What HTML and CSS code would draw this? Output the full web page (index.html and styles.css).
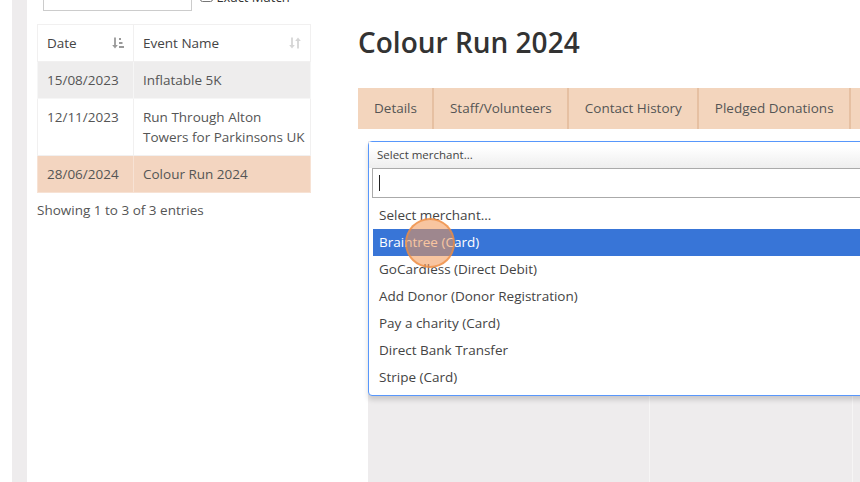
FILE: index.html
```html
<!DOCTYPE html>
<html lang="en">
<head>
    <meta charset="UTF-8">
    <title>Colour Run 2024</title>
    <link rel="stylesheet" href="styles.css">
</head>
<body>
<div class="page">
    <div class="rail"></div>
    <div class="sidebar">
        <div class="filter">
            <input type="text" class="filter_input">
            <label class="filter_exact"><input type="checkbox"> Exact Match</label>
        </div>
        <table class="events">
            <thead>
                <tr>
                    <th class="col_date">
                        <span>Date</span>
                        <svg class="sort sort_on" width="12" height="12" viewBox="0 0 12 12">
                            <path d="M3 0.5v9.5" stroke="currentColor" stroke-width="1.8" fill="none"/>
                            <path d="M0.2 8l2.8 3.6 2.8-3.6z" fill="currentColor"/>
                            <rect x="7" y="1" width="2" height="2" fill="currentColor"/>
                            <rect x="7" y="5" width="3.5" height="2" fill="currentColor"/>
                            <rect x="7" y="9" width="5" height="2" fill="currentColor"/>
                        </svg>
                    </th>
                    <th>
                        <span>Event Name</span>
                        <svg class="sort" width="12" height="12" viewBox="0 0 12 12">
                            <path d="M3 0.5v9.5" stroke="currentColor" stroke-width="1.8" fill="none"/>
                            <path d="M0.2 8l2.8 3.6 2.8-3.6z" fill="currentColor"/>
                            <path d="M9 2v9.5" stroke="currentColor" stroke-width="1.8" fill="none"/>
                            <path d="M6.2 4l2.8-3.6 2.8 3.6z" fill="currentColor"/>
                        </svg>
                    </th>
                </tr>
            </thead>
            <tbody>
                <tr class="row_odd"><td>15/08/2023</td><td>Inflatable 5K</td></tr>
                <tr><td>12/11/2023</td><td>Run Through Alton<br>Towers for Parkinsons UK</td></tr>
                <tr class="row_active"><td>28/06/2024</td><td>Colour Run 2024</td></tr>
            </tbody>
        </table>
        <p class="info">Showing 1 to 3 of 3 entries</p>
    </div>
    <div class="main">
        <h1 class="event_title">Colour Run 2024</h1>
        <ul class="tabs">
            <li>Details</li>
            <li>Staff/Volunteers</li>
            <li>Contact History</li>
            <li>Pledged Donations</li>
            <li>Merchants</li>
        </ul>
        <div class="panels">
            <div class="panel"></div>
            <div class="panel"></div>
            <div class="panel"></div>

            <div class="drop">
                <div class="drop_choice">Select merchant...</div>
                <div class="drop_search"><span class="caret"></span></div>
                <ul class="drop_results">
                    <li>Select merchant...</li>
                    <li class="highlighted">Braintree (Card)</li>
                    <li>GoCardless (Direct Debit)</li>
                    <li>Add Donor (Donor Registration)</li>
                    <li>Pay a charity (Card)</li>
                    <li>Direct Bank Transfer</li>
                    <li>Stripe (Card)</li>
                </ul>
            </div>
            <div class="click_mark"></div>
        </div>
    </div>
</div>
</body>
</html>
```

FILE: styles.css
```css
*{margin: 0;padding: 0;box-sizing: border-box}
body{
    font-family: "Open Sans", "Liberation Sans", sans-serif;
    font-size: 13.5px;
    color: #555;
    background: #fff;
    overflow: hidden;
}
.page{
    display: flex;
    height: 482px;
    overflow: hidden;
}
.rail{
    flex-shrink: 0;
    width: 15px;
    margin-left: 12px;
    background: #eeeced;
}
.sidebar{
    flex-shrink: 0;
    width: 274px;
    margin-left: 10px;
}
    .filter{
        display: flex;
        height: 30px;
        margin-top: -19px;
    }
    .filter_input{
        width: 149px;
        height: 30px;
        margin-left: 6px;
        border: 1px solid #ccc;
    }
    .filter_exact{
        margin: 6px 0 0 8px;
        height: 20px;
        line-height: 20px;
        font-size: 13px;
        color: #333;
        white-space: nowrap;
    }
    .events{
        width: 274px;
        margin-top: 13px;
        border-collapse: collapse;
    }
    .events th,
    .events td{
        padding: 8px 4px 8px 9px;
        line-height: 20px;
        border: 1px solid #f1f0f0;
        text-align: left;
        vertical-align: top;
        white-space: nowrap;
    }
    .events th{
        position: relative;
        font-weight: normal;
        color: #444;
    }
    .col_date{
        width: 96px;
    }
    .sort{
        position: absolute;
        right: 9px;
        top: 12px;
        color: #d5d5d5;
    }
    .sort_on{
        color: #999;
    }
    .row_odd td{
        background: #eeeded;
        border-color: #f6f6f6;
    }
    .row_active td{
        background: #f3d5c0;
        border-color: #f7e2d4;
    }
    .info{
        margin-top: 7px;
        line-height: 20px;
    }
.main{
    flex: 1;
    min-width: 0;
    margin-left: 47px;
}
    .event_title{
        margin-top: 23px;
        font-size: 28px;
        line-height: 38px;
        font-weight: 600;
        color: #333;
    }
    .tabs{
        display: flex;
        width: max-content;
        margin-top: 27px;
        list-style: none;
        background: #f3d5bd;
    }
    .tabs li{
        height: 41px;
        line-height: 41px;
        padding: 0 15px 0 16px;
        border-right: 2px solid #e6c0a2;
        white-space: nowrap;
    }
    .panels{
        position: relative;
        display: grid;
        grid-template-columns: 281px 202px 1fr;
        gap: 1px;
        width: 560px;
        height: 341px;
        margin: 12px 0 0 10px;
        background: #f6f5f5;
    }
    .panel{
        background: #eeeced;
    }
    .drop{
        position: absolute;
        top: 0;
        left: 0;
        width: 540px;
        background: #fff;
        border: 1px solid #5897fb;
        border-radius: 4px;
        box-shadow: 0 4px 5px rgba(0,0,0,0.15);
    }
    .drop_choice{
        height: 26px;
        padding-left: 8px;
        line-height: 26px;
        font-size: 11.5px;
        color: #444;
        background: linear-gradient(#fff 20%, #eee 100%);
    }
    .drop_search{
        height: 30px;
        margin: 0 0 0 3px;
        border: 1px solid #aaa;
        padding: 6px 0 0 6px;
    }
    .caret{
        display: block;
        width: 1px;
        height: 16px;
        background: #222;
    }
    .drop_results{
        list-style: none;
        margin: 4px 0 0 4px;
        padding-bottom: 4px;
        color: #444;
    }
    .drop_results li{
        height: 27px;
        line-height: 27px;
        padding-left: 6px;
    }
    .drop_results .highlighted{
        background: #3875d7;
        color: #fff;
    }
    .click_mark{
        position: absolute;
        left: 37px;
        top: 77px;
        width: 50px;
        height: 50px;
        border-radius: 50%;
        background: rgba(242,150,82,0.55);
        border: 2px solid rgba(238,140,62,0.7);
    }
```
